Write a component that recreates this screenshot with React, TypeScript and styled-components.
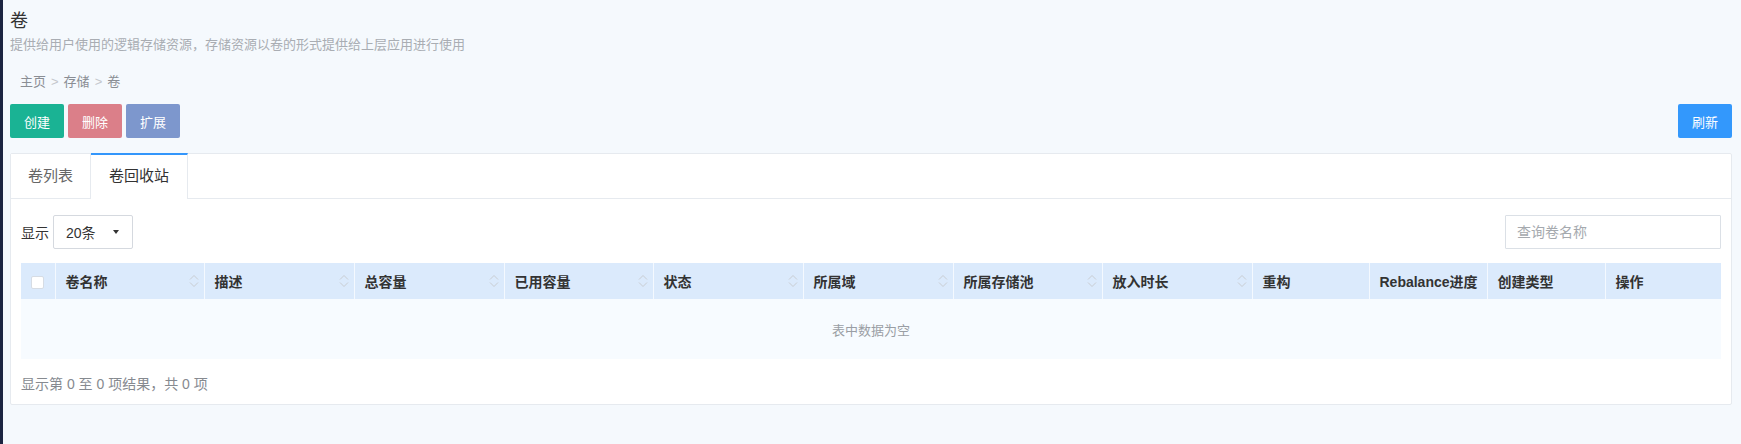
import React from "react";
import styled, { createGlobalStyle } from "styled-components";

const GlobalStyle = createGlobalStyle`
  html, body { margin: 0; padding: 0; }
  body {
    background: #f5f9fd;
    font-family: "Liberation Sans", "Noto Sans CJK SC", sans-serif;
    color: #333;
  }
  * { box-sizing: border-box; }
`;

const Page = styled.div`
  min-height: 444px;
  border-left: 3px solid #1c2541;
  padding: 9px 9px 0 7px;
`;

const Title = styled.h1`
  margin: 0;
  font-size: 18px;
  font-weight: normal;
  line-height: 24px;
  color: #333;
`;

const Subtitle = styled.p`
  margin: 3px 0 0;
  font-size: 13px;
  line-height: 18px;
  color: #a9adb3;
`;

const Breadcrumb = styled.nav`
  margin-top: 18px;
  padding-left: 10px;
  font-size: 13px;
  line-height: 20px;
  color: #8a8e94;
  display: flex;
  align-items: center;
`;

const Sep = styled.span`
  color: #c4c7cc;
  padding: 0 5px;
`;

const Toolbar = styled.div`
  margin-top: 12px;
  display: flex;
  justify-content: space-between;
  align-items: center;
`;

const BtnGroup = styled.div`
  display: flex;
  gap: 4px;
`;

const Button = styled.button<{ $bg: string }>`
  height: 34px;
  padding: 0 14px;
  border: none;
  border-radius: 2px;
  background: ${(p) => p.$bg};
  color: #fff;
  font-family: inherit;
  font-size: 13px;
  cursor: pointer;
`;

const Panel = styled.section`
  margin-top: 15px;
  background: #fff;
  border: 1px solid #e6eaef;
  border-radius: 2px;
`;

const TabBar = styled.div`
  display: flex;
  height: 45px;
  border-bottom: 1px solid #e6eaef;
`;

const Tab = styled.div<{ $active?: boolean }>`
  height: 45px;
  padding: 0 ${(p) => (p.$active ? 18 : 17)}px;
  font-size: 15px;
  line-height: ${(p) => (p.$active ? 42 : 44)}px;
  color: ${(p) => (p.$active ? "#333" : "#666")};
  background: #fff;
  border-right: 1px solid #e6eaef;
  border-top: ${(p) => (p.$active ? "2px solid #3396fb" : "none")};
  margin-top: ${(p) => (p.$active ? "-1px" : "0")};
  height: ${(p) => (p.$active ? "46px" : "44px")};
  position: relative;
  z-index: 1;
`;

const PanelBody = styled.div`
  padding: 16px 10px 10px;
`;

const Controls = styled.div`
  display: flex;
  justify-content: space-between;
  align-items: center;
`;

const ShowLabel = styled.label`
  display: flex;
  align-items: center;
  gap: 4px;
  font-size: 14px;
  color: #333;
`;

const Select = styled.div`
  width: 80px;
  height: 34px;
  border: 1px solid #d5d9df;
  border-radius: 2px;
  display: flex;
  align-items: center;
  justify-content: space-between;
  padding: 0 13px 0 12px;
  font-size: 14px;
  color: #333;
`;

const Caret = styled.span`
  width: 0;
  height: 0;
  border-left: 3.5px solid transparent;
  border-right: 3.5px solid transparent;
  border-top: 4px solid #333;
`;

const Search = styled.input`
  width: 216px;
  height: 34px;
  border: 1px solid #dbe0e6;
  border-radius: 1px;
  padding: 0 11px;
  font-family: inherit;
  font-size: 14px;
  outline: none;
  &::placeholder { color: #a5a9ae; }
`;

const Table = styled.table`
  margin-top: 14px;
  width: 100%;
  table-layout: fixed;
  border-collapse: collapse;
`;

const Th = styled.th`
  height: 36px;
  background: #dbeafc;
  border-left: 1px solid #f4f9ff;
  padding: 0 10px;
  text-align: left;
  font-size: 14px;
  font-weight: bold;
  color: #333;
  position: relative;
  white-space: nowrap;
  &:first-child { border-left: none; padding: 0; text-align: center; }
`;

const SortIcon = styled.svg`
  position: absolute;
  right: 5px;
  top: 11px;
`;

const Checkbox = styled.span`
  display: inline-block;
  width: 13px;
  height: 13px;
  background: #fff;
  border: 1px solid #d6dce4;
  border-radius: 2px;
  vertical-align: middle;
`;

const EmptyCell = styled.td`
  height: 60px;
  background: #f7fbff;
  text-align: center;
  font-size: 13px;
  color: #9a9ea4;
`;

const Footer = styled.div`
  margin-top: 15px;
  font-size: 14px;
  line-height: 20px;
  color: #868a90;
`;

const Sort = () => (
  <SortIcon width="10" height="14" viewBox="0 0 10 14">
    <path d="M1 5.5 L5 1.5 L9 5.5" fill="none" stroke="#c9cdd2" strokeWidth="1" />
    <path d="M1 8.5 L5 12.5 L9 8.5" fill="none" stroke="#c9cdd2" strokeWidth="1" />
  </SortIcon>
);

const columns: { name: string; width: number; sort: boolean }[] = [
  { name: "卷名称", width: 149, sort: true },
  { name: "描述", width: 150, sort: true },
  { name: "总容量", width: 150, sort: true },
  { name: "已用容量", width: 149, sort: true },
  { name: "状态", width: 150, sort: true },
  { name: "所属域", width: 150, sort: true },
  { name: "所属存储池", width: 149, sort: true },
  { name: "放入时长", width: 150, sort: true },
  { name: "重构", width: 117, sort: false },
  { name: "Rebalance进度", width: 118, sort: false },
  { name: "创建类型", width: 118, sort: false },
  { name: "操作", width: 116, sort: false },
];

export default function App() {
  return (
    <>
      <GlobalStyle />
      <Page>
        <Title>卷</Title>
        <Subtitle>提供给用户使用的逻辑存储资源，存储资源以卷的形式提供给上层应用进行使用</Subtitle>
        <Breadcrumb>
          <span>主页</span>
          <Sep>&gt;</Sep>
          <span>存储</span>
          <Sep>&gt;</Sep>
          <span>卷</span>
        </Breadcrumb>
        <Toolbar>
          <BtnGroup>
            <Button $bg="#1ab394">创建</Button>
            <Button $bg="#db7f89">删除</Button>
            <Button $bg="#7d97cd">扩展</Button>
          </BtnGroup>
          <Button $bg="#3398fc">刷新</Button>
        </Toolbar>
        <Panel>
          <TabBar>
            <Tab>卷列表</Tab>
            <Tab $active>卷回收站</Tab>
          </TabBar>
          <PanelBody>
            <Controls>
              <ShowLabel>
                显示
                <Select>
                  <span>20条</span>
                  <Caret />
                </Select>
              </ShowLabel>
              <Search placeholder="查询卷名称" />
            </Controls>
            <Table>
              <colgroup>
                <col style={{ width: 34 }} />
                {columns.map((c) => (
                  <col key={c.name} style={{ width: c.width }} />
                ))}
              </colgroup>
              <thead>
                <tr>
                  <Th>
                    <Checkbox />
                  </Th>
                  {columns.map((c) => (
                    <Th key={c.name}>
                      {c.name}
                      {c.sort && <Sort />}
                    </Th>
                  ))}
                </tr>
              </thead>
              <tbody>
                <tr>
                  <EmptyCell colSpan={13}>表中数据为空</EmptyCell>
                </tr>
              </tbody>
            </Table>
            <Footer>显示第 0 至 0 项结果，共 0 项</Footer>
          </PanelBody>
        </Panel>
      </Page>
    </>
  );
}
